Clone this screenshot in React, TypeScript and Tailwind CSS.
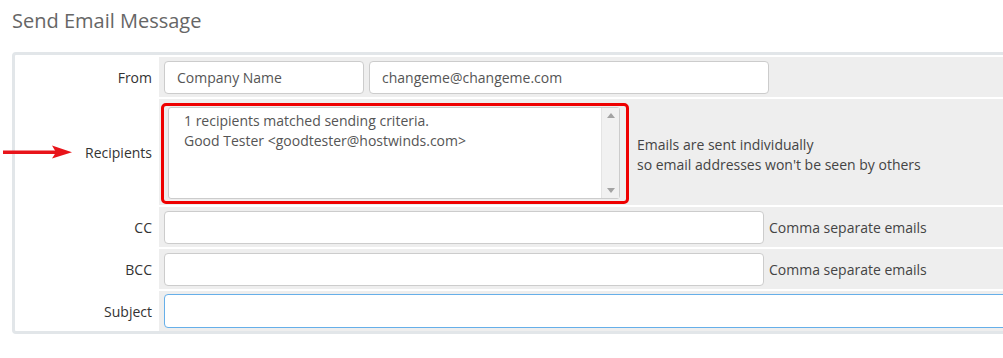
import React from "react";

const font = { fontFamily: '"Open Sans", "Liberation Sans", sans-serif' };

function Label({ children }: { children: React.ReactNode }) {
  return (
    <div className="w-[142px] shrink-0 flex items-center justify-end pr-[5px] text-[14px] text-[#333]">
      {children}
    </div>
  );
}

function TextInput({
  className,
  value,
}: {
  className: string;
  value?: string;
}) {
  return (
    <div
      className={`h-[33px] shrink-0 bg-white border border-[#cccccc] rounded-[4px] flex items-center pl-[12px] text-[14px] text-[#555] ${className}`}
    >
      {value}
    </div>
  );
}

function FakeTextarea() {
  return (
    <div className="rounded-[5px] border-[3px] border-[#ee0000] pl-[4px] pr-[6px] pt-px pb-[2px]">
      <div className="w-[452px] h-[92px] bg-white border border-[#cccccc] rounded-[3px] flex">
        <div className="flex-1 pl-[15px] pt-[3px] text-[14px] leading-[20px] text-[#555]">
          <div>1 recipients matched sending criteria.</div>
          <div>Good Tester &lt;goodtester@hostwinds.com&gt;</div>
        </div>
        <div className="w-[18px] bg-[#f1f1f1] border-l border-[#e4e4e4] flex flex-col items-center justify-between py-[5px]">
          <svg width="8" height="5" viewBox="0 0 8 5">
            <path d="M0 5 L4 0 L8 5 Z" fill="#a3a3a3" />
          </svg>
          <svg width="8" height="5" viewBox="0 0 8 5">
            <path d="M0 0 L4 5 L8 0 Z" fill="#a3a3a3" />
          </svg>
        </div>
      </div>
    </div>
  );
}

export default function App() {
  return (
    <div className="relative w-[1003px] h-[358px] overflow-hidden bg-white" style={font}>
      <h1 className="pl-[12px] pt-[10px] text-[20px] leading-[22px] text-[#666]">
        Send Email Message
      </h1>

      <div className="mt-[20px] ml-[12px] w-[1010px] border-[3px] border-[#e2e6e9] rounded-[4px] bg-white pt-[2px] flex flex-col gap-[2px]">
        <div className="flex h-[40px] gap-[2px]">
          <Label>From</Label>
          <div className="flex-1 bg-[#eeeeee] flex items-center gap-[5px] pl-[5px]">
            <TextInput className="w-[200px]" value="Company Name" />
            <TextInput className="w-[400px]" value="changeme@changeme.com" />
          </div>
        </div>

        <div className="flex h-[106px] gap-[2px]">
          <Label>Recipients</Label>
          <div className="flex-1 bg-[#eeeeee] flex items-start pl-[2px] pt-[4px] gap-[8px]">
            <FakeTextarea />
            <div className="self-center text-[14px] leading-[20px] text-[#444] pt-[1px]">
              <div>Emails are sent individually</div>
              <div>so email addresses won't be seen by others</div>
            </div>
          </div>
        </div>

        <div className="flex h-[40px] gap-[2px]">
          <Label>CC</Label>
          <div className="flex-1 bg-[#eeeeee] flex items-center gap-[5px] pl-[5px]">
            <TextInput className="w-[600px]" />
            <span className="text-[14px] text-[#444]">Comma separate emails</span>
          </div>
        </div>

        <div className="flex h-[40px] gap-[2px]">
          <Label>BCC</Label>
          <div className="flex-1 bg-[#eeeeee] flex items-center gap-[5px] pl-[5px]">
            <TextInput className="w-[600px]" />
            <span className="text-[14px] text-[#444]">Comma separate emails</span>
          </div>
        </div>

        <div className="flex h-[40px] gap-[2px]">
          <Label>Subject</Label>
          <div className="flex-1 bg-[#eeeeee] flex items-center pl-[5px]">
            <div className="h-[34px] w-[900px] bg-white border border-[#66afe9] rounded-[4px]" />
          </div>
        </div>
      </div>

      <svg
        className="absolute left-[3px] top-[145px]"
        width="70"
        height="14"
        viewBox="0 0 70 14"
      >
        <rect x="0" y="5.5" width="54" height="3.5" fill="#e8141a" />
        <path d="M49 0.5 L69 7.2 L49 13.5 L53 7.2 Z" fill="#e8141a" />
      </svg>
    </div>
  );
}
